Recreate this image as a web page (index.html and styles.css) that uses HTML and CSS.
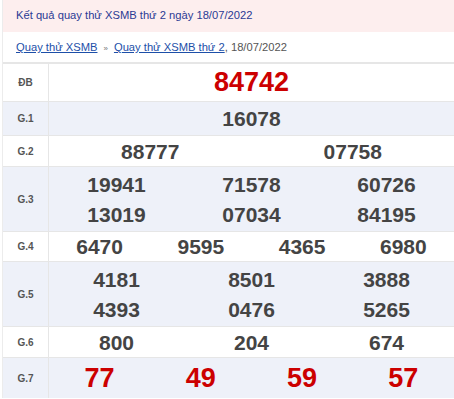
FILE: index.html
```html
<!DOCTYPE html>
<html lang="vi">
<head>
<meta charset="utf-8">
<title>Kết quả quay thử XSMB</title>
<link rel="stylesheet" href="styles.css">
</head>
<body>
<div class="page">
  <div class="title">Kết quả quay thử XSMB thứ 2 ngày 18/07/2022</div>
  <div class="crumb">
    <a href="#">Quay thử XSMB</a><span class="sep">»</span><a href="#">Quay thử XSMB thứ 2</a>, 18/07/2022
  </div>
  <div class="table">
    <div class="row h-db">
      <div class="label">ĐB</div>
      <div class="cells cols-1"><span class="num big red">84742</span></div>
    </div>
    <div class="row alt h-g1">
      <div class="label">G.1</div>
      <div class="cells cols-1"><span class="num">16078</span></div>
    </div>
    <div class="row h-g2">
      <div class="label">G.2</div>
      <div class="cells cols-2"><span class="num">88777</span><span class="num">07758</span></div>
    </div>
    <div class="row alt h-double">
      <div class="label">G.3</div>
      <div class="cells cols-3 two-lines">
        <span class="num">19941</span><span class="num">71578</span><span class="num">60726</span>
        <span class="num">13019</span><span class="num">07034</span><span class="num">84195</span>
      </div>
    </div>
    <div class="row h-g4">
      <div class="label">G.4</div>
      <div class="cells cols-4"><span class="num">6470</span><span class="num">9595</span><span class="num">4365</span><span class="num">6980</span></div>
    </div>
    <div class="row alt h-double">
      <div class="label">G.5</div>
      <div class="cells cols-3 two-lines">
        <span class="num">4181</span><span class="num">8501</span><span class="num">3888</span>
        <span class="num">4393</span><span class="num">0476</span><span class="num">5265</span>
      </div>
    </div>
    <div class="row h-g6">
      <div class="label">G.6</div>
      <div class="cells cols-3"><span class="num">800</span><span class="num">204</span><span class="num">674</span></div>
    </div>
    <div class="row alt h-g7">
      <div class="label">G.7</div>
      <div class="cells cols-4"><span class="num big red">77</span><span class="num big red">49</span><span class="num big red">59</span><span class="num big red">57</span></div>
    </div>
  </div>
</div>
</body>
</html>
```
FILE: styles.css
```css
html, body {
  margin: 0;
  padding: 0;
  background: #ffffff;
  overflow: hidden;
}
body {
  font-family: "Liberation Sans", Arial, sans-serif;
}
.page {
  margin-left: 2px;
  width: 451px;
  border-left: 1px solid #ececec;
}
.title {
  height: 32px;
  background: #fdeeee;
  color: #2b3a94;
  font-size: 11.2px;
  line-height: 31px;
  padding-left: 13px;
  box-sizing: border-box;
}
.crumb {
  height: 30px;
  line-height: 31px;
  padding-left: 13px;
  font-size: 11.2px;
  color: #555;
  box-sizing: border-box;
}
.crumb a {
  color: #1d4fa8;
  text-decoration: underline;
}
.crumb .sep {
  color: #777;
  font-size: 8px;
  margin: 0 6px;
}
.table {
  border-top: 2px solid #e6e6e6;
}
.row {
  display: flex;
  border-bottom: 1px solid #e6e6e6;
  box-sizing: border-box;
  background: #fff;
}
.row.alt {
  background: #eef1f9;
}
.h-db { height: 38px; }
.h-g1 { height: 34px; }
.h-g2 { height: 31px; }
.h-double { height: 65px; }
.h-g4 { height: 30px; }
.h-g6 { height: 31px; }
.h-g7 { height: 40px; border-bottom: none; }
.label {
  width: 45px;
  flex: none;
  border-right: 1px solid #e6e6e6;
  display: flex;
  align-items: center;
  justify-content: center;
  font-size: 10px;
  font-weight: bold;
  color: #555;
}
.cells {
  flex: 1;
  display: grid;
  align-items: center;
  justify-items: center;
}
.cols-1 { grid-template-columns: 1fr; }
.cols-2 { grid-template-columns: 1fr 1fr; }
.cols-3 { grid-template-columns: 1fr 1fr 1fr; }
.cols-4 { grid-template-columns: 1fr 1fr 1fr 1fr; }
.two-lines {
  grid-template-rows: 30px 30px;
  align-content: center;
}
.num {
  font-size: 21px;
  font-weight: bold;
  color: #444;
  line-height: 1;
}
.num.big {
  font-size: 27px;
}
.num.red {
  color: #cc0000;
}
```
